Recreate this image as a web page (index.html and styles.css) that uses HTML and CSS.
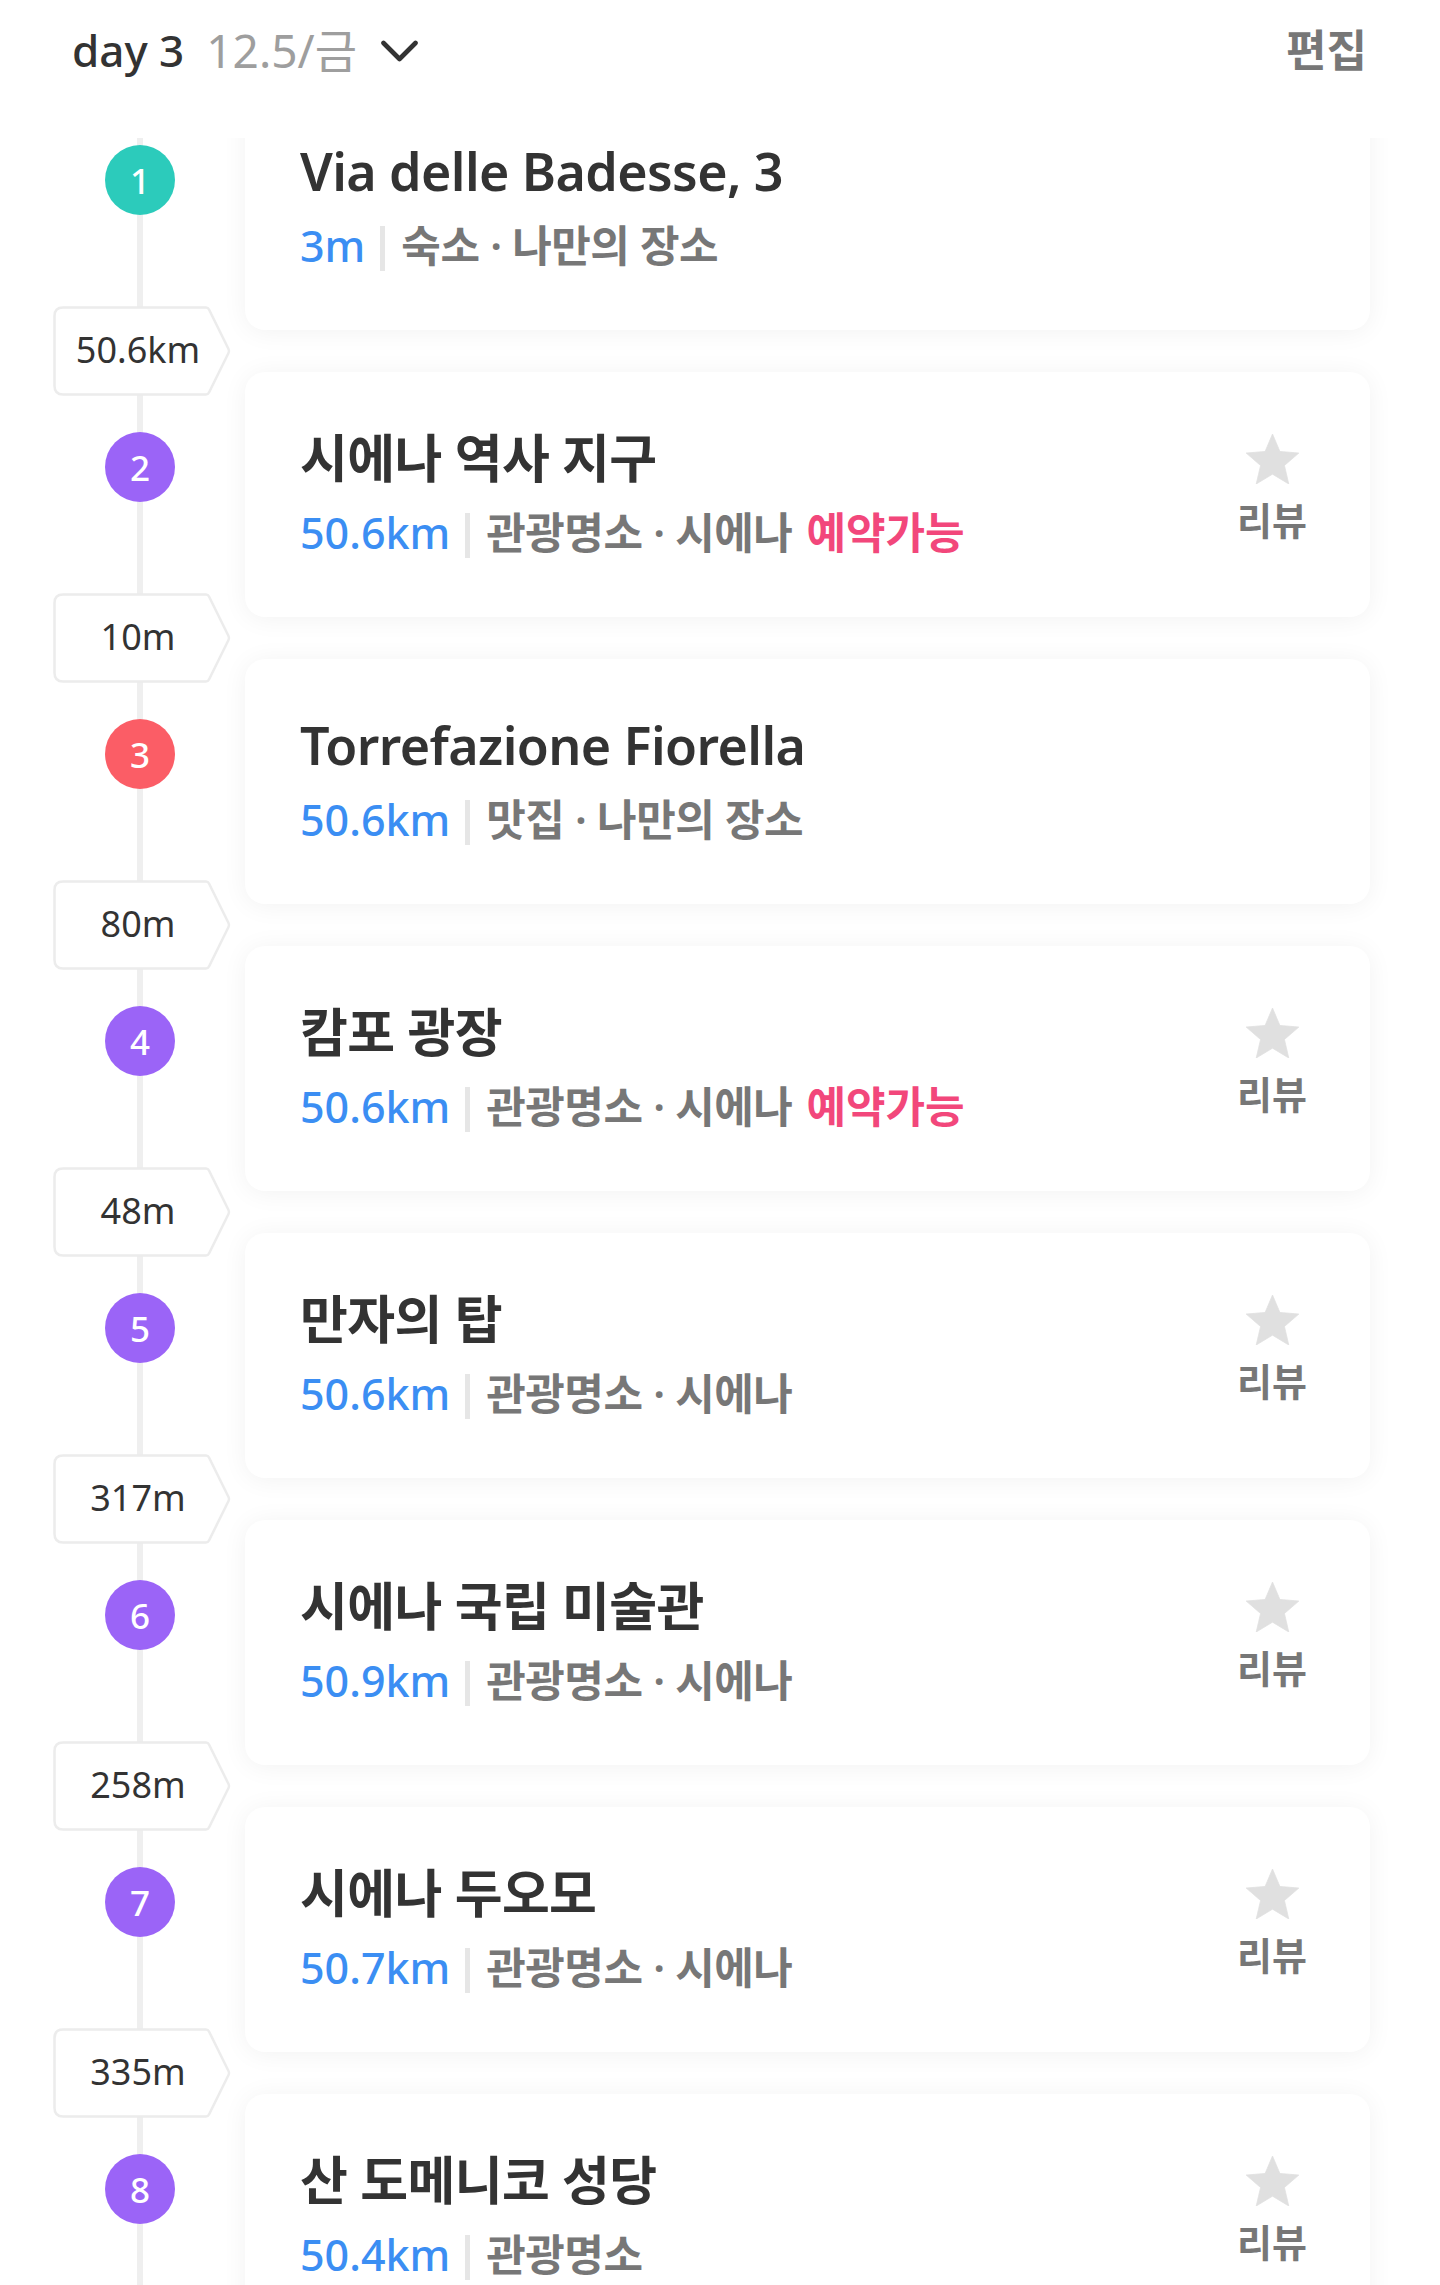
FILE: index.html
```html
<!DOCTYPE html>
<html lang="ko">
<head>
<meta charset="utf-8">
<title>day 3</title>
<link rel="stylesheet" href="styles.css">
</head>
<body>
<header class="top">
  <div class="day">
    <span class="day-num">day 3</span>
    <span class="date">12.5/금</span>
    <svg class="chev" width="37" height="23" viewBox="0 0 37 23"><polyline points="2.5,3 18.5,19 34.5,3" fill="none" stroke="#333" stroke-width="4.6" stroke-linecap="round" stroke-linejoin="round"/></svg>
  </div>
  <div class="edit">편집</div>
</header>

<main class="list">
  <div class="stop">
    <div class="rail"><div class="pin teal">1</div></div>
    <div class="card">
      <div class="info">
        <div class="title">Via delle Badesse, 3</div>
        <div class="meta"><span class="dist">3m</span><span class="bar"></span><span class="cat">숙소 · 나만의 장소</span></div>
      </div>
    </div>
  </div>

  <div class="leg"><div class="badge"><svg class="badge-bg" width="178" height="90" viewBox="0 0 178 90"><path d="M10 1.5 H153 Q155 1.5 156 3.5 L175.5 43 Q176.5 45 175.5 47 L156 86.5 Q155 88.5 153 88.5 H10 Q1.5 88.5 1.5 80 V10 Q1.5 1.5 10 1.5 Z" fill="#fff" stroke="#ececec" stroke-width="2.5"/></svg><span class="badge-text">50.6km</span></div></div>

  <div class="stop">
    <div class="rail"><div class="pin purple">2</div></div>
    <div class="card">
      <div class="info">
        <div class="title">시에나 역사 지구</div>
        <div class="meta"><span class="dist">50.6km</span><span class="bar"></span><span class="cat">관광명소 · 시에나</span><span class="book">예약가능</span></div>
      </div>
      <div class="review"><svg class="star" width="53" height="50" viewBox="2 2 20 19"><path d="M12 17.27L18.18 21l-1.64-7.03L22 9.24l-7.19-.61L12 2 9.19 8.63 2 9.24l5.46 4.73L5.82 21z" fill="#e0e0e0" stroke="#e0e0e0" stroke-width="0.3" stroke-linejoin="round"/></svg><span class="review-text">리뷰</span></div>
    </div>
  </div>

  <div class="leg"><div class="badge"><svg class="badge-bg" width="178" height="90" viewBox="0 0 178 90"><path d="M10 1.5 H153 Q155 1.5 156 3.5 L175.5 43 Q176.5 45 175.5 47 L156 86.5 Q155 88.5 153 88.5 H10 Q1.5 88.5 1.5 80 V10 Q1.5 1.5 10 1.5 Z" fill="#fff" stroke="#ececec" stroke-width="2.5"/></svg><span class="badge-text">10m</span></div></div>

  <div class="stop">
    <div class="rail"><div class="pin red">3</div></div>
    <div class="card">
      <div class="info">
        <div class="title">Torrefazione Fiorella</div>
        <div class="meta"><span class="dist">50.6km</span><span class="bar"></span><span class="cat">맛집 · 나만의 장소</span></div>
      </div>
    </div>
  </div>

  <div class="leg"><div class="badge"><svg class="badge-bg" width="178" height="90" viewBox="0 0 178 90"><path d="M10 1.5 H153 Q155 1.5 156 3.5 L175.5 43 Q176.5 45 175.5 47 L156 86.5 Q155 88.5 153 88.5 H10 Q1.5 88.5 1.5 80 V10 Q1.5 1.5 10 1.5 Z" fill="#fff" stroke="#ececec" stroke-width="2.5"/></svg><span class="badge-text">80m</span></div></div>

  <div class="stop">
    <div class="rail"><div class="pin purple">4</div></div>
    <div class="card">
      <div class="info">
        <div class="title">캄포 광장</div>
        <div class="meta"><span class="dist">50.6km</span><span class="bar"></span><span class="cat">관광명소 · 시에나</span><span class="book">예약가능</span></div>
      </div>
      <div class="review"><svg class="star" width="53" height="50" viewBox="2 2 20 19"><path d="M12 17.27L18.18 21l-1.64-7.03L22 9.24l-7.19-.61L12 2 9.19 8.63 2 9.24l5.46 4.73L5.82 21z" fill="#e0e0e0" stroke="#e0e0e0" stroke-width="0.3" stroke-linejoin="round"/></svg><span class="review-text">리뷰</span></div>
    </div>
  </div>

  <div class="leg"><div class="badge"><svg class="badge-bg" width="178" height="90" viewBox="0 0 178 90"><path d="M10 1.5 H153 Q155 1.5 156 3.5 L175.5 43 Q176.5 45 175.5 47 L156 86.5 Q155 88.5 153 88.5 H10 Q1.5 88.5 1.5 80 V10 Q1.5 1.5 10 1.5 Z" fill="#fff" stroke="#ececec" stroke-width="2.5"/></svg><span class="badge-text">48m</span></div></div>

  <div class="stop">
    <div class="rail"><div class="pin purple">5</div></div>
    <div class="card">
      <div class="info">
        <div class="title">만자의 탑</div>
        <div class="meta"><span class="dist">50.6km</span><span class="bar"></span><span class="cat">관광명소 · 시에나</span></div>
      </div>
      <div class="review"><svg class="star" width="53" height="50" viewBox="2 2 20 19"><path d="M12 17.27L18.18 21l-1.64-7.03L22 9.24l-7.19-.61L12 2 9.19 8.63 2 9.24l5.46 4.73L5.82 21z" fill="#e0e0e0" stroke="#e0e0e0" stroke-width="0.3" stroke-linejoin="round"/></svg><span class="review-text">리뷰</span></div>
    </div>
  </div>

  <div class="leg"><div class="badge"><svg class="badge-bg" width="178" height="90" viewBox="0 0 178 90"><path d="M10 1.5 H153 Q155 1.5 156 3.5 L175.5 43 Q176.5 45 175.5 47 L156 86.5 Q155 88.5 153 88.5 H10 Q1.5 88.5 1.5 80 V10 Q1.5 1.5 10 1.5 Z" fill="#fff" stroke="#ececec" stroke-width="2.5"/></svg><span class="badge-text">317m</span></div></div>

  <div class="stop">
    <div class="rail"><div class="pin purple">6</div></div>
    <div class="card">
      <div class="info">
        <div class="title">시에나 국립 미술관</div>
        <div class="meta"><span class="dist">50.9km</span><span class="bar"></span><span class="cat">관광명소 · 시에나</span></div>
      </div>
      <div class="review"><svg class="star" width="53" height="50" viewBox="2 2 20 19"><path d="M12 17.27L18.18 21l-1.64-7.03L22 9.24l-7.19-.61L12 2 9.19 8.63 2 9.24l5.46 4.73L5.82 21z" fill="#e0e0e0" stroke="#e0e0e0" stroke-width="0.3" stroke-linejoin="round"/></svg><span class="review-text">리뷰</span></div>
    </div>
  </div>

  <div class="leg"><div class="badge"><svg class="badge-bg" width="178" height="90" viewBox="0 0 178 90"><path d="M10 1.5 H153 Q155 1.5 156 3.5 L175.5 43 Q176.5 45 175.5 47 L156 86.5 Q155 88.5 153 88.5 H10 Q1.5 88.5 1.5 80 V10 Q1.5 1.5 10 1.5 Z" fill="#fff" stroke="#ececec" stroke-width="2.5"/></svg><span class="badge-text">258m</span></div></div>

  <div class="stop">
    <div class="rail"><div class="pin purple">7</div></div>
    <div class="card">
      <div class="info">
        <div class="title">시에나 두오모</div>
        <div class="meta"><span class="dist">50.7km</span><span class="bar"></span><span class="cat">관광명소 · 시에나</span></div>
      </div>
      <div class="review"><svg class="star" width="53" height="50" viewBox="2 2 20 19"><path d="M12 17.27L18.18 21l-1.64-7.03L22 9.24l-7.19-.61L12 2 9.19 8.63 2 9.24l5.46 4.73L5.82 21z" fill="#e0e0e0" stroke="#e0e0e0" stroke-width="0.3" stroke-linejoin="round"/></svg><span class="review-text">리뷰</span></div>
    </div>
  </div>

  <div class="leg"><div class="badge"><svg class="badge-bg" width="178" height="90" viewBox="0 0 178 90"><path d="M10 1.5 H153 Q155 1.5 156 3.5 L175.5 43 Q176.5 45 175.5 47 L156 86.5 Q155 88.5 153 88.5 H10 Q1.5 88.5 1.5 80 V10 Q1.5 1.5 10 1.5 Z" fill="#fff" stroke="#ececec" stroke-width="2.5"/></svg><span class="badge-text">335m</span></div></div>

  <div class="stop">
    <div class="rail"><div class="pin purple">8</div></div>
    <div class="card">
      <div class="info">
        <div class="title">산 도메니코 성당</div>
        <div class="meta"><span class="dist">50.4km</span><span class="bar"></span><span class="cat">관광명소</span></div>
      </div>
      <div class="review"><svg class="star" width="53" height="50" viewBox="2 2 20 19"><path d="M12 17.27L18.18 21l-1.64-7.03L22 9.24l-7.19-.61L12 2 9.19 8.63 2 9.24l5.46 4.73L5.82 21z" fill="#e0e0e0" stroke="#e0e0e0" stroke-width="0.3" stroke-linejoin="round"/></svg><span class="review-text">리뷰</span></div>
    </div>
  </div>
</main>
</body>
</html>
```

FILE: styles.css
```css
html, body {
  margin: 0;
  padding: 0;
  background: #fff;
  overflow: hidden;
}

body {
  font-family: "Noto Sans", "Noto Sans CJK KR", sans-serif;
  color: #333;
}

.top {
  position: relative;
  z-index: 5;
  height: 138px;
  box-sizing: border-box;
  padding: 24px 73px 0 72px;
  display: flex;
  justify-content: space-between;
  align-items: flex-start;
  background: #fff;
}

.day {
  display: flex;
  align-items: center;
  font-size: 44px;
  line-height: 53px;
}

.day-num {
  color: #333;
  font-weight: 500;
}

.date {
  color: #9e9e9e;
  margin-left: 22px;
  font-size: 46px;
}

.chev {
  margin-left: 24px;
  margin-top: 2px;
}

.edit {
  font-size: 44px;
  line-height: 53px;
  color: #777;
  font-weight: 700;
}

.list {
  margin-top: -53px;
  background: linear-gradient(#efefef, #efefef) no-repeat 137px 0 / 6px 100%;
}

.stop {
  display: grid;
  grid-template-columns: 245px 1125px;
}

.rail {
  padding-top: 60px;
}

.pin {
  margin-left: 105px;
  width: 70px;
  height: 70px;
  border-radius: 50%;
  display: flex;
  align-items: center;
  justify-content: center;
  color: #fff;
  font-size: 35px;
  font-weight: 500;
  line-height: 1;
}

.teal { background: #2ccbbb; }
.purple { background: #9b64f7; }
.red { background: #fb5d66; }

.card {
  position: relative;
  z-index: 1;
  height: 245px;
  box-sizing: border-box;
  padding: 55px 63px 0 55px;
  background: #fff;
  border-radius: 20px;
  box-shadow: 0 2px 26px rgba(0, 0, 0, 0.055);
  display: flex;
  justify-content: space-between;
  align-items: flex-start;
}

.title {
  font-size: 52px;
  line-height: 62px;
  font-weight: 600;
  color: #333;
  letter-spacing: -0.6px;
}

.meta {
  margin-top: 18px;
  display: flex;
  align-items: center;
  font-size: 43px;
  line-height: 52px;
}

.dist {
  color: #3b8ef3;
  font-weight: 500;
}

.bar {
  width: 5px;
  height: 45px;
  background: #e6e6e6;
  margin: 4px 16px 0 15px;
}

.cat {
  color: #777;
  font-weight: 600;
  letter-spacing: -0.5px;
}

.book {
  color: #f2477b;
  font-weight: 600;
  margin-left: 14px;
}

.review {
  display: flex;
  flex-direction: column;
  align-items: center;
  padding-top: 7px;
}

.star {
  display: block;
}

.review-text {
  margin-top: 13px;
  font-size: 38px;
  line-height: 46px;
  color: #777;
  font-weight: 600;
}

.leg {
  height: 42px;
  display: flex;
  align-items: center;
}

.badge {
  position: relative;
  z-index: 2;
  margin-left: 53px;
  width: 178px;
  height: 90px;
  display: grid;
  align-items: center;
}

.badge-bg {
  grid-area: 1 / 1;
  display: block;
}

.badge-text {
  grid-area: 1 / 1;
  width: 170px;
  text-align: center;
  font-size: 36px;
  color: #333;
  line-height: 1;
  padding-bottom: 2px;
}
```
